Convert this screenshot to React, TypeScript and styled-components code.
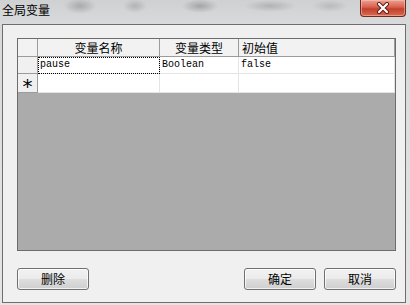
import React from "react";
import styled, { createGlobalStyle } from "styled-components";

const Global = createGlobalStyle`
  html, body { margin: 0; padding: 0; background: #d9d9d9; }
  body { font-family: "Noto Sans CJK SC", "Liberation Sans", sans-serif; }
`;

const Window = styled.div`
  width: 410px;
  height: 305px;
  display: flex;
  flex-direction: column;
  background: linear-gradient(180deg, #d6d7d9 0%, #dfe0e2 60%, #e4e4e4 100%);
  overflow: hidden;
`;

const TitleBar = styled.div`
  height: 24px;
  display: flex;
  justify-content: space-between;
  align-items: flex-start;
  background:
    radial-gradient(ellipse 16px 8px at 80px 6px, rgba(120,120,120,0.45), transparent),
    radial-gradient(ellipse 12px 7px at 135px 6px, rgba(120,120,120,0.35), transparent),
    radial-gradient(ellipse 18px 7px at 200px 6px, rgba(110,110,110,0.45), transparent),
    radial-gradient(ellipse 26px 6px at 270px 6px, rgba(120,120,120,0.35), transparent),
    radial-gradient(ellipse 18px 6px at 330px 6px, rgba(130,130,130,0.3), transparent),
    linear-gradient(180deg, #cfd0d2 0%, #d9dadc 100%);
`;

const Title = styled.div`
  padding: 2px 0 0 2px;
  font-size: 12px;
  line-height: 16px;
  color: #000;
`;

const CloseButton = styled.div`
  width: 44px;
  height: 16px;
  margin-right: 4px;
  border: 1px solid #6d2a20;
  border-top: none;
  border-radius: 0 0 4px 4px;
  background: linear-gradient(180deg, #e9a294 0%, #d8604c 45%, #c3402c 55%, #d66a50 100%);
  display: flex;
  align-items: center;
  justify-content: center;
  box-shadow: inset 0 0 0 1px rgba(255, 200, 190, 0.5);
`;

const Client = styled.div`
  margin: 0 4px 2px 2px;
  flex: 1;
  border: 1px solid #6e6e6e;
  background: #f0f0f0;
  display: flex;
  flex-direction: column;
  padding: 13px 9px 12px 14px;
  gap: 17px;
`;

const Grid = styled.div`
  height: 213px;
  box-sizing: border-box;
  border: 1px solid #6c6c6c;
  background: #ababab;
  display: flex;
  flex-direction: column;
`;

const Row = styled.div<{ $h: number }>`
  display: grid;
  grid-template-columns: 20px 122px 79px 1fr;
  height: ${(p) => p.$h}px;
`;

const HeaderCell = styled.div<{ $align?: string }>`
  box-sizing: border-box;
  background: #f2f2f2;
  border-right: 1px solid #9b9b9b;
  border-bottom: 1px solid #9b9b9b;
  font-size: 12px;
  line-height: 17px;
  text-align: ${(p) => p.$align || "center"};
  padding-left: ${(p) => (p.$align === "left" ? "3px" : "0")};
  color: #000;
  white-space: nowrap;
`;

const SelectorCell = styled.div`
  box-sizing: border-box;
  background: #f0f0f0;
  border-right: 1px solid #9b9b9b;
  border-bottom: 1px solid #9b9b9b;
  font-family: "DejaVu Sans", sans-serif;
  font-size: 20px;
  line-height: 10px;
  padding-top: 7px;
  text-align: center;
  color: #000;
`;

const DataCell = styled.div<{ $focus?: boolean }>`
  box-sizing: border-box;
  background: #fff;
  border-right: 1px solid #e4e4e4;
  border-bottom: 1px solid #e4e4e4;
  font-family: "Liberation Mono", "DejaVu Sans Mono", monospace;
  font-size: 10px;
  line-height: 15px;
  padding-left: 2px;
  color: #000;
  white-space: nowrap;
  outline: ${(p) => (p.$focus ? "1px dotted #000" : "none")};
  outline-offset: -1px;
`;

const ButtonRow = styled.div`
  display: flex;
  align-items: center;
`;

const Spacer = styled.div`
  flex: 1;
`;

const Button = styled.button<{ $gap?: number }>`
  width: 72px;
  height: 22px;
  margin-left: ${(p) => p.$gap || 0}px;
  border: 1px solid #707070;
  border-radius: 3px;
  background: linear-gradient(180deg, #f2f2f2 0%, #ebebeb 48%, #dddddd 52%, #cfcfcf 100%);
  box-shadow: inset 0 0 0 1px rgba(255, 255, 255, 0.7);
  font-family: "Noto Sans CJK SC", sans-serif;
  font-size: 12px;
  line-height: 18px;
  color: #000;
  padding: 0;
`;

export default function App() {
  return (
    <>
      <Global />
      <Window>
        <TitleBar>
          <Title>全局变量</Title>
          <CloseButton>
            <svg width="14" height="12" viewBox="0 0 14 12">
              <path d="M3 2 L11 10 M11 2 L3 10" stroke="#5a1a12" strokeWidth="4" strokeLinecap="round" />
              <path d="M3 2 L11 10 M11 2 L3 10" stroke="#ffffff" strokeWidth="2.2" strokeLinecap="round" />
            </svg>
          </CloseButton>
        </TitleBar>
        <Client>
          <Grid>
            <Row $h={18}>
              <HeaderCell />
              <HeaderCell>变量名称</HeaderCell>
              <HeaderCell>变量类型</HeaderCell>
              <HeaderCell $align="left">初始值</HeaderCell>
            </Row>
            <Row $h={17}>
              <SelectorCell />
              <DataCell $focus>pause</DataCell>
              <DataCell>Boolean</DataCell>
              <DataCell>false</DataCell>
            </Row>
            <Row $h={19}>
              <SelectorCell>*</SelectorCell>
              <DataCell />
              <DataCell />
              <DataCell />
            </Row>
          </Grid>
          <ButtonRow>
            <Button>删除</Button>
            <Spacer />
            <Button>确定</Button>
            <Button $gap={8}>取消</Button>
          </ButtonRow>
        </Client>
      </Window>
    </>
  );
}
